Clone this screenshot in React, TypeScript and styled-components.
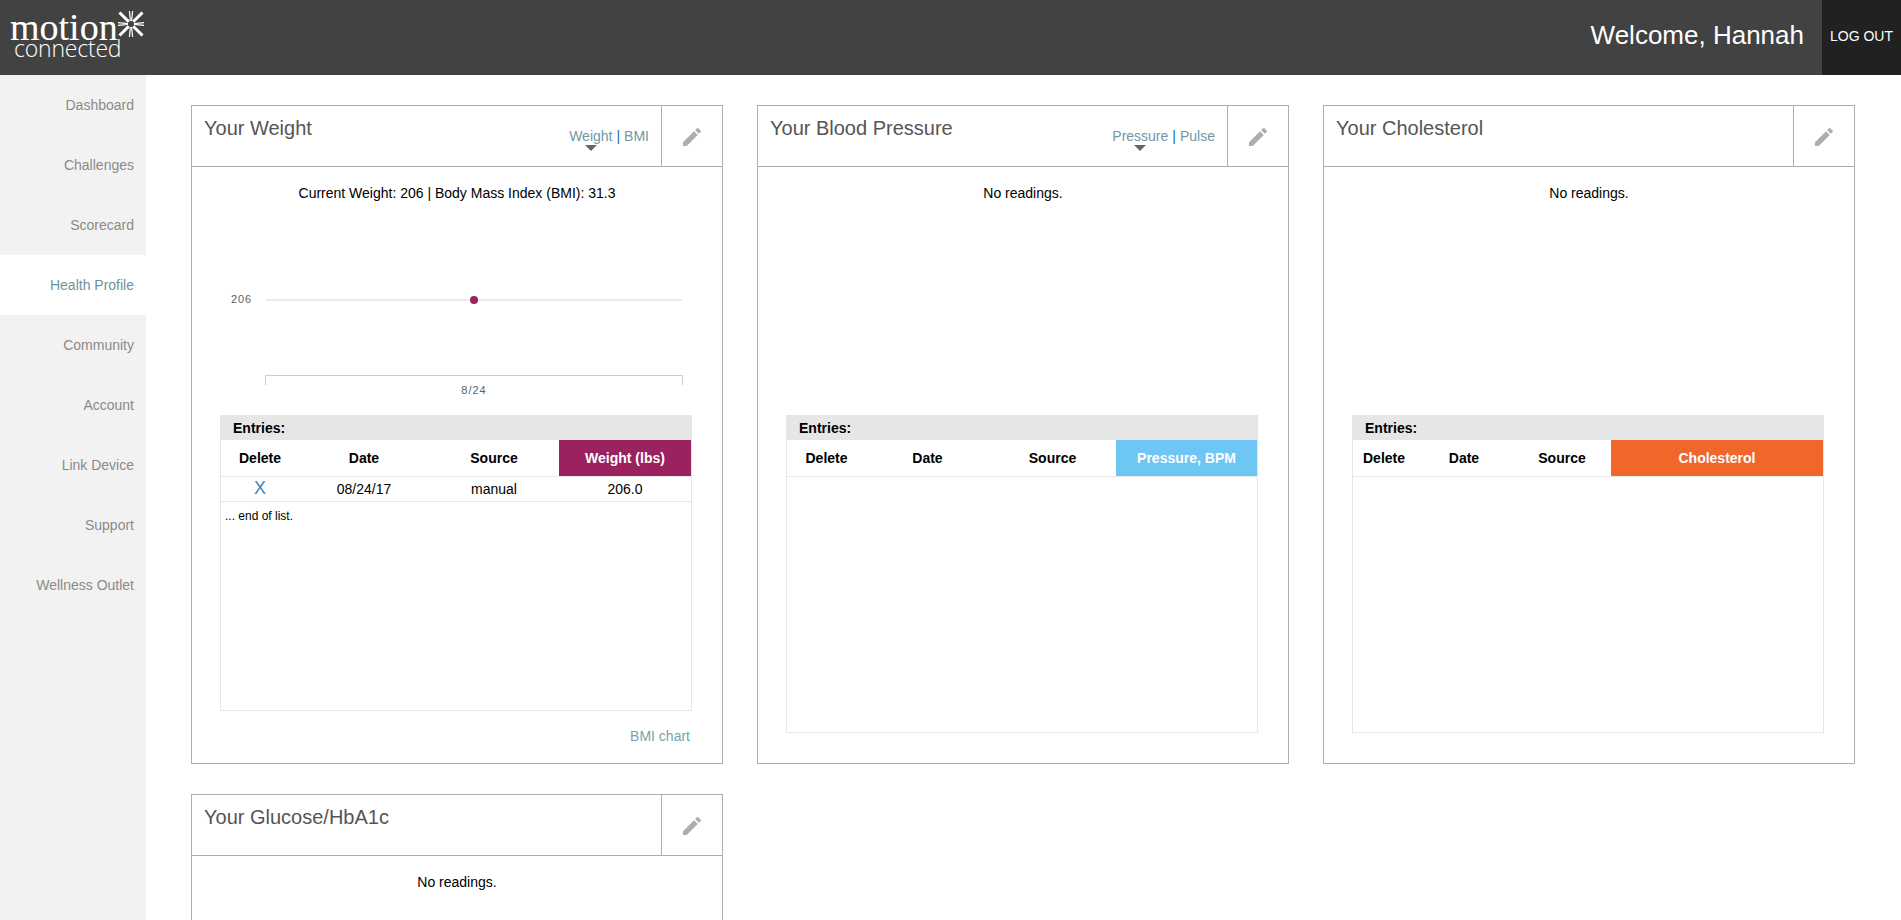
import React from 'react';
import styled, { createGlobalStyle } from 'styled-components';
import { MdEdit } from 'react-icons/md';

const GlobalStyle = createGlobalStyle`
	html, body {
		margin: 0;
		padding: 0;
		background: #fff;
		font-family: "Liberation Sans", Arial, sans-serif;
	}
`;

type CardData = {
	title: string;
	summary: string;
	toggle?: string[];
	columns: string;
	heads: string[];
	accent: string;
	weight?: boolean;
};

const navList = [
	'Dashboard',
	'Challenges',
	'Scorecard',
	'Health Profile',
	'Community',
	'Account',
	'Link Device',
	'Support',
	'Wellness Outlet',
];

const cards: CardData[] = [
	{
		title: 'Your Weight',
		summary: 'Current Weight: 206 | Body Mass Index (BMI): 31.3',
		toggle: ['Weight', 'BMI'],
		columns: '78px 130px 130px 132px',
		heads: ['Delete', 'Date', 'Source', 'Weight (lbs)'],
		accent: '#9b225f',
		weight: true,
	},
	{
		title: 'Your Blood Pressure',
		summary: 'No readings.',
		toggle: ['Pressure', 'Pulse'],
		columns: '79px 123px 127px 141px',
		heads: ['Delete', 'Date', 'Source', 'Pressure, BPM'],
		accent: '#6ec6f5',
	},
	{
		title: 'Your Cholesterol',
		summary: 'No readings.',
		columns: '62px 98px 98px 212px',
		heads: ['Delete', 'Date', 'Source', 'Cholesterol'],
		accent: '#f0662b',
	},
	{
		title: 'Your Glucose/HbA1c',
		summary: 'No readings.',
		columns: '68px 86px 104px 212px',
		heads: ['Delete', 'Date', 'Source', 'Glucose'],
		accent: '#9b225f',
	},
];

function Starburst() {
	return (
		<svg width="26" height="26" viewBox="0 0 26 26">
			<g stroke="#fff" fill="none">
				<path d="M1.5 1.5L10.8 10.8M24.5 1.5L15.2 10.8M1.5 24.5L10.8 15.2M24.5 24.5L15.2 15.2" strokeWidth="3" />
				<path d="M11.4 0L12.4 10M14.6 0L13.6 10M11.4 26L12.4 16M14.6 26L13.6 16" strokeWidth="1.2" />
				<path d="M0 11.6L10 12.6M0 14.4L10 13.4M26 11.6L16 12.6M26 14.4L16 13.4" strokeWidth="1.2" />
			</g>
		</svg>
	);
}

function WeightChart() {
	return (
		<ChartSvg width="472" height="212" viewBox="0 0 472 212">
			<line x1="46" y1="97" x2="462" y2="97" stroke="#d8d8d8" />
			<circle cx="254" cy="97" r="4" fill="#9b225f" />
			<text x="32" y="100" textAnchor="end" fontSize="11" letterSpacing="0.9" fill="#606060">
				206
			</text>
			<path d="M45.5 182V172.5H462.5V182" stroke="#c0d0e0" fill="none" />
			<text x="254" y="191" textAnchor="middle" fontSize="11" letterSpacing="1" fill="#606060">
				8/24
			</text>
		</ChartSvg>
	);
}

function Card({ data }: { data: CardData }) {
	const { title, summary, toggle, columns, heads, accent, weight } = data;

	return (
		<StyledCard>
			<CardHeader>
				<CardTitle>{title}</CardTitle>
				{toggle && (
					<Toggle>
						<ToggleOption>
							{toggle[0]}
							<Caret />
						</ToggleOption>
						<ToggleBar>|</ToggleBar>
						<ToggleOption>{toggle[1]}</ToggleOption>
					</Toggle>
				)}
				<EditCell>
					<MdEdit size={24} color="#adadad" />
				</EditCell>
			</CardHeader>
			<CardBody>
				<Summary>{summary}</Summary>
				<ChartArea>{weight && <WeightChart />}</ChartArea>
				<Entries>
					<EntriesTitle>Entries:</EntriesTitle>
					<HeadRow $columns={columns}>
						{heads.map((head, i) => (
							<HeadCell key={head} $accent={i === heads.length - 1 ? accent : undefined}>
								{head}
							</HeadCell>
						))}
					</HeadRow>
					{weight && (
						<>
							<DataRow $columns={columns}>
								<DeleteMark>X</DeleteMark>
								<span>08/24/17</span>
								<span>manual</span>
								<span>206.0</span>
							</DataRow>
							<EndOfList>... end of list.</EndOfList>
						</>
					)}
				</Entries>
				<CardFooter $tall={weight}>{weight && <FooterLink>BMI chart</FooterLink>}</CardFooter>
			</CardBody>
		</StyledCard>
	);
}

export default function App() {
	return (
		<Page>
			<GlobalStyle />
			<TopBar>
				<Logo>
					<LogoTop>
						<LogoMotion>motion</LogoMotion>
						<Starburst />
					</LogoTop>
					<LogoConnected>connected</LogoConnected>
				</Logo>
				<TopRight>
					<Welcome>Welcome, Hannah</Welcome>
					<LogOut>LOG OUT</LogOut>
				</TopRight>
			</TopBar>
			<Columns>
				<SideNav>
					{navList.map(item => (
						<NavItem key={item} $active={item === 'Health Profile'}>
							{item}
						</NavItem>
					))}
				</SideNav>
				<Main>
					{cards.map(card => (
						<Card key={card.title} data={card} />
					))}
				</Main>
			</Columns>
		</Page>
	);
}

const Page = styled.div`
	display: flex;
	flex-direction: column;
	height: 100vh;
	overflow: hidden;
`;

const TopBar = styled.header`
	display: flex;
	flex: none;
	justify-content: space-between;
	height: 75px;
	background: #424242;
`;

const Logo = styled.div`
	display: flex;
	flex-direction: column;
	padding: 11px 0 0 10px;
	color: #fff;
`;

const LogoTop = styled.div`
	display: flex;
	align-items: flex-start;
	height: 28px;
`;

const LogoMotion = styled.span`
	margin-top: 3px;
	font-family: "Liberation Serif", "Times New Roman", serif;
	font-size: 38px;
	line-height: 26px;
	-webkit-text-stroke: 0.1px #fff;
`;

const LogoConnected = styled.span`
	margin-left: 4px;
	font-family: "Open Sans", Lato, sans-serif;
	font-weight: 300;
	font-size: 23px;
	line-height: 18px;
	letter-spacing: -0.2px;
`;

const TopRight = styled.div`
	display: flex;
	align-items: stretch;
`;

const Welcome = styled.div`
	margin-right: 18px;
	padding-bottom: 4px;
	align-self: center;
	font-size: 26px;
	color: #fff;
`;

const LogOut = styled.div`
	display: flex;
	align-items: center;
	justify-content: center;
	box-sizing: border-box;
	width: 79px;
	padding-bottom: 4px;
	background: #212121;
	font-size: 14px;
	color: #fff;
`;

const Columns = styled.div`
	display: flex;
	flex: 1;
	min-height: 0;
`;

const SideNav = styled.nav`
	flex: none;
	width: 146px;
	background: #f2f2f2;
`;

const NavItem = styled.div<{ $active?: boolean }>`
	display: flex;
	align-items: center;
	justify-content: flex-end;
	height: 60px;
	padding-right: 12px;
	font-size: 14px;
	color: ${props => (props.$active ? '#6f929e' : '#8c8a88')};
	background: ${props => (props.$active ? '#fff' : 'transparent')};
`;

const Main = styled.main`
	display: grid;
	grid-template-columns: repeat(3, 532px);
	grid-auto-rows: 659px;
	column-gap: 34px;
	row-gap: 30px;
	padding: 30px 0 0 45px;
`;

const StyledCard = styled.section`
	display: flex;
	flex-direction: column;
	box-sizing: border-box;
	border: 1px solid #aeaeae;
`;

const CardHeader = styled.div`
	display: flex;
	flex: none;
	height: 60px;
	border-bottom: 1px solid #aeaeae;
`;

const CardTitle = styled.h2`
	flex: 1;
	margin: 0;
	padding: 11px 0 0 12px;
	font-size: 20px;
	line-height: 23px;
	font-weight: 400;
	color: #555;
`;

const Toggle = styled.div`
	display: flex;
	gap: 4px;
	padding: 21px 12px 0 0;
	font-size: 14px;
	line-height: 18px;
	color: #7197a5;
`;

const ToggleOption = styled.span`
	position: relative;
`;

const ToggleBar = styled.span`
	color: #1a6f9f;
`;

const Caret = styled.i`
	position: absolute;
	left: 50%;
	top: 18px;
	margin-left: -6px;
	border-style: solid;
	border-width: 6px 6px 0;
	border-color: #666 transparent transparent;
`;

const EditCell = styled.div`
	display: flex;
	flex: none;
	align-items: center;
	justify-content: center;
	box-sizing: border-box;
	width: 61px;
	padding-top: 2px;
	border-left: 1px solid #aeaeae;
`;

const CardBody = styled.div`
	display: flex;
	flex: 1;
	flex-direction: column;
	min-height: 0;
	padding: 0 30px 0 28px;
`;

const Summary = styled.div`
	flex: none;
	box-sizing: content-box;
	height: 22px;
	padding: 14px 0 0 2px;
	font-size: 14px;
	line-height: 24px;
	text-align: center;
	color: #000;
`;

const ChartArea = styled.div`
	flex: none;
	height: 212px;
`;

const ChartSvg = styled.svg`
	display: block;
	font-family: "Liberation Sans", Arial, sans-serif;
`;

const Entries = styled.div`
	display: flex;
	flex: 1;
	flex-direction: column;
	min-height: 0;
	box-sizing: border-box;
	border: 1px solid #e6e6e6;
	border-top: 0;
`;

const EntriesTitle = styled.div`
	flex: none;
	height: 25px;
	margin: 0 -1px;
	padding-left: 13px;
	background: #e6e6e6;
	font-size: 14px;
	font-weight: 700;
	line-height: 27px;
	color: #000;
`;

const HeadRow = styled.div<{ $columns: string }>`
	display: grid;
	flex: none;
	grid-template-columns: ${props => props.$columns};
	height: 36px;
	border-bottom: 1px solid #e6e6e6;
`;

const HeadCell = styled.div<{ $accent?: string }>`
	display: flex;
	align-items: center;
	justify-content: center;
	font-size: 14px;
	font-weight: 700;
	color: ${props => (props.$accent ? '#fff' : '#000')};
	background: ${props => props.$accent || 'transparent'};
`;

const DataRow = styled.div<{ $columns: string }>`
	display: grid;
	flex: none;
	grid-template-columns: ${props => props.$columns};
	align-items: center;
	height: 24px;
	border-bottom: 1px solid #e6e6e6;
	font-size: 14px;
	text-align: center;
	color: #000;
`;

const DeleteMark = styled.span`
	margin-top: -2px;
	font-size: 18px;
	line-height: 18px;
	color: #3a85b8;
`;

const EndOfList = styled.div`
	padding: 7px 0 0 4px;
	font-size: 12px;
	line-height: 14px;
	color: #000;
`;

const CardFooter = styled.div<{ $tall?: boolean }>`
	flex: none;
	height: ${props => (props.$tall ? '52px' : '30px')};
	text-align: right;
`;

const FooterLink = styled.span`
	display: inline-block;
	margin: 17px 2px 0 0;
	font-size: 14px;
	line-height: 16px;
	color: #7a9fae;
`;
